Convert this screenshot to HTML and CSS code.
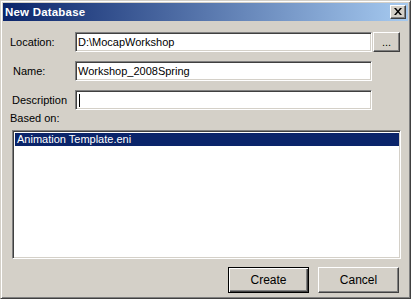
FILE: index.html
```html
<!DOCTYPE html>
<html>
<head>
<meta charset="utf-8">
<link rel="stylesheet" href="styles.css">
</head>
<body>
<div class="window">
  <div class="titlebar">
    <span class="title">New Database</span>
    <span class="close"><svg width="8" height="7" viewBox="0 0 8 7"><path d="M0 0h2l2 2.5L6 0h2L5 3.5 8 7H6L4 4.5 2 7H0l3-3.5z" fill="#000"/></svg></span>
  </div>
  <div class="content">
    <div class="row">
      <span class="label l-loc">Location:</span>
      <div class="field">D:\MocapWorkshop</div>
      <div class="browse">...</div>
    </div>
    <div class="row">
      <span class="label l-name">Name:</span>
      <div class="field">Workshop_2008Spring</div>
    </div>
    <div class="row">
      <span class="label l-desc">Description</span>
      <div class="field"><span class="caret"></span></div>
    </div>
    <div class="based">Based on:</div>
    <div class="listbox">
      <div class="item selected">Animation Template.eni</div>
    </div>
    <div class="buttons">
      <div class="btn default">Create</div>
      <div class="btn">Cancel</div>
    </div>
  </div>
</div>
</body>
</html>
```
FILE: styles.css
```css
html, body {
  margin: 0;
  padding: 0;
  background: #d4d0c8;
}
.window {
  width: 411px;
  height: 299px;
  box-sizing: border-box;
  border: 1px solid;
  border-color: #d4d0c8 #404040 #404040 #d4d0c8;
  box-shadow: inset 1px 1px #fff, inset -1px -1px #808080;
  padding: 2px;
  background: #d4d0c8;
  font-family: "Liberation Sans", Arial, sans-serif;
  font-size: 11px;
  color: #000;
  display: flex;
  flex-direction: column;
}
.titlebar {
  height: 18px;
  background: linear-gradient(to right, #0a246a, #a6caf0);
  display: flex;
  align-items: center;
  justify-content: space-between;
  padding: 0 2px 0 2px;
  flex: none;
}
.title {
  color: #fff;
  font-weight: bold;
  font-size: 11.5px;
  letter-spacing: 0.2px;
}
.close {
  width: 16px;
  height: 14px;
  box-sizing: border-box;
  background: #d4d0c8;
  border: 1px solid;
  border-color: #fff #404040 #404040 #fff;
  box-shadow: inset -1px -1px #808080;
  display: flex;
  align-items: center;
  justify-content: center;
  padding-right: 1px;
  padding-bottom: 1px;
}
.close svg { display: block; }
.content {
  padding: 11px 0 0 7px;
  display: flex;
  flex-direction: column;
}
.row {
  display: flex;
  align-items: center;
  height: 20px;
  margin-bottom: 9px;
}
.label {
  width: 65px;
  flex: none;
  box-sizing: border-box;
}
.l-loc { padding-left: 0; }
.l-name { padding-left: 3px; }
.l-desc { padding-left: 2px; }
.field {
  width: 297px;
  height: 20px;
  box-sizing: border-box;
  background: #fff;
  border: 1px solid;
  border-color: #808080 #fff #fff #808080;
  box-shadow: inset 1px 1px #404040, inset -1px -1px #d4d0c8;
  padding: 0 0 0 2px;
  display: flex;
  align-items: center;
  line-height: 13px;
}
.caret {
  width: 1px;
  height: 13px;
  background: #000;
  margin-left: 1px;
}
.browse {
  width: 27px;
  height: 20px;
  margin-left: 1px;
  box-sizing: border-box;
  border: 1px solid;
  border-color: #fff #404040 #404040 #fff;
  box-shadow: inset -1px -1px #808080;
  display: flex;
  align-items: center;
  justify-content: center;
  padding-bottom: 1px;
}
.based {
  line-height: 13px;
  margin-top: -8px;
  padding-top: 1px;
  margin-bottom: 5px;
}
.listbox {
  margin-left: 2px;
  width: 389px;
  height: 129px;
  box-sizing: border-box;
  background: #fff;
  border: 1px solid;
  border-color: #808080 #fff #fff #808080;
  box-shadow: inset 1px 1px #404040, inset -1px -1px #d4d0c8;
  padding: 1px 1px 1px 1px;
}
.item {
  height: 13px;
  line-height: 13px;
  padding-left: 2px;
  margin-left: 1px;
  margin-top: 1px;
}
.selected {
  background: #0a246a;
  color: #fff;
}
.buttons {
  display: flex;
  justify-content: flex-end;
  gap: 9px;
  margin-top: 8px;
  padding-right: 9px;
}
.btn {
  width: 81px;
  height: 26px;
  box-sizing: border-box;
  border: 1px solid;
  border-color: #fff #404040 #404040 #fff;
  box-shadow: inset -1px -1px #808080;
  display: flex;
  align-items: center;
  justify-content: center;
  font-size: 12px;
}
.btn.default {
  border-color: #000;
  box-shadow: inset 1px 1px #fff, inset -1px -1px #404040, inset -2px -2px #808080;
}
```
